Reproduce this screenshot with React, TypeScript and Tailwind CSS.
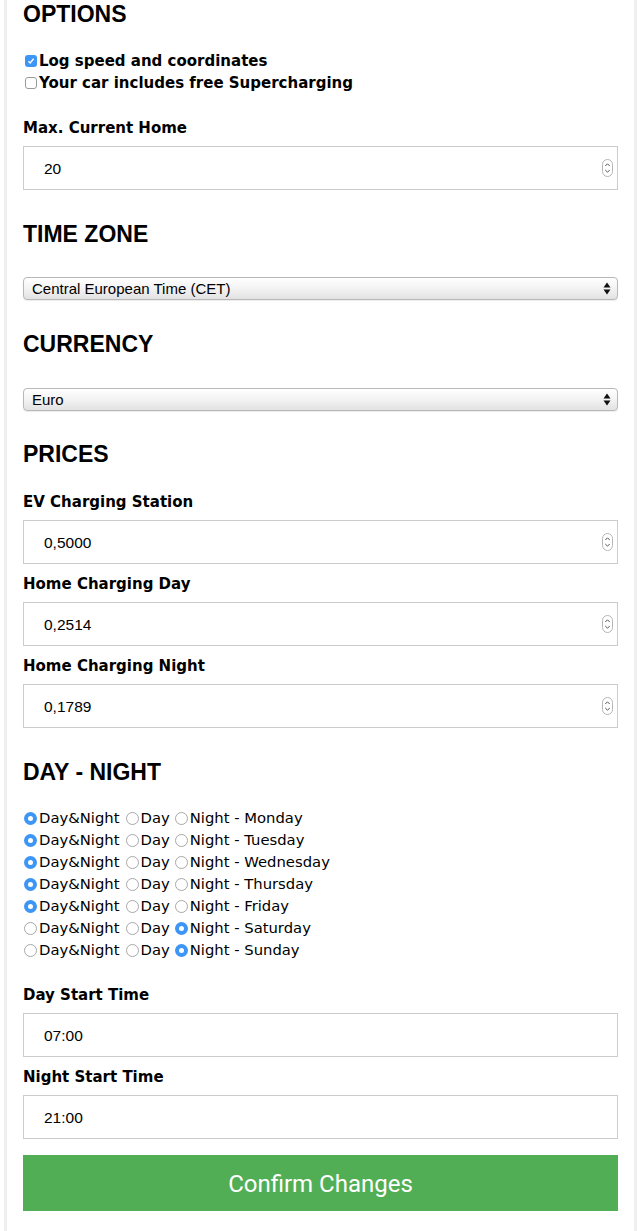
import { useState } from "react";

const days = ["Monday", "Tuesday", "Wednesday", "Thursday", "Friday", "Saturday", "Sunday"];
const initialModes = ["both", "both", "both", "both", "both", "night", "night"];

function Heading({ children, className = "" }: { children: React.ReactNode; className?: string }) {
    return (
        <h2 className={`h-[28px] leading-[28px] text-[23px] font-bold font-['Liberation_Sans',Arial,sans-serif] ${className}`}>
            {children}
        </h2>
    );
}

function Label({ children, className = "" }: { children: React.ReactNode; className?: string }) {
    return (
        <div className={`h-[22px] leading-[24px] text-[15px] font-bold font-['DejaVu_Sans',Verdana,sans-serif] ${className}`}>
            {children}
        </div>
    );
}

function Spinner() {
    return (
        <svg width="11" height="18" viewBox="0 0 11 18" className="shrink-0">
            <rect x="0.5" y="0.5" width="10" height="17" rx="5" fill="white" stroke="#b5b5b5" />
            <path d="M3.3 7 L5.5 4.8 L7.7 7" fill="none" stroke="#555" strokeWidth="1" />
            <path d="M3.3 11 L5.5 13.2 L7.7 11" fill="none" stroke="#555" strokeWidth="1" />
        </svg>
    );
}

function Field({ value, spin = false, className = "" }: { value: string; spin?: boolean; className?: string }) {
    return (
        <div
            className={`h-[44px] border border-[#cccccc] bg-white flex items-center pl-[20px] pr-[4px] text-[15.5px] font-['Liberation_Sans',Arial,sans-serif] ${className}`}
        >
            <span className="flex-1 pt-[1px]">{value}</span>
            {spin && <Spinner />}
        </div>
    );
}

function Select({ value, className = "" }: { value: string; className?: string }) {
    return (
        <div
            className={`h-[23px] rounded-[4px] border border-[#b8b8b8] bg-gradient-to-b from-white via-[#f3f3f3] to-[#e2e2e2] flex items-center pl-[8px] pr-[6px] text-[15px] font-['Liberation_Sans',Arial,sans-serif] shadow-[0_1px_1px_rgba(0,0,0,0.08)] ${className}`}
        >
            <span className="flex-1 pt-[1px]">{value}</span>
            <svg width="8" height="13" viewBox="0 0 8 13">
                <path d="M4 0.5 L7.5 5.5 L0.5 5.5 Z" fill="#111" />
                <path d="M4 12.5 L7.5 7.5 L0.5 7.5 Z" fill="#111" />
            </svg>
        </div>
    );
}

function Check({ on }: { on: boolean }) {
    return on ? (
        <span className="w-[12px] h-[12px] rounded-[3px] bg-[#3d95f5] flex items-center justify-center shrink-0 mr-[2px]">
            <svg width="8" height="8" viewBox="0 0 8 8">
                <path d="M1.5 4.2 L3.2 6 L6.6 1.8" fill="none" stroke="white" strokeWidth="1.4" />
            </svg>
        </span>
    ) : (
        <span className="w-[12px] h-[12px] rounded-[3px] border border-[#9a9a9a] bg-white shrink-0 mr-[2px]" />
    );
}

function Radio({ on }: { on: boolean }) {
    return on ? (
        <span className="w-[13px] h-[13px] rounded-full bg-[#3d95f5] flex items-center justify-center shrink-0 mr-[2px]">
            <span className="w-[5px] h-[5px] rounded-full bg-white" />
        </span>
    ) : (
        <span className="w-[13px] h-[13px] rounded-full border border-[#a8a8a8] bg-white shrink-0 mr-[2px]" />
    );
}

export default function App() {
    const [modes] = useState(initialModes);

    return (
        <div className="bg-white min-h-screen">
            <div className="ml-[4px] w-[633px] border-x-[3px] border-[#efefef] px-[16px] pb-[40px] text-black bg-white">
                <Heading>OPTIONS</Heading>

                <div className="mt-[22px] text-[15px] font-bold font-['DejaVu_Sans',Verdana,sans-serif]">
                    <div className="h-[22px] flex items-center pl-[2px]">
                        <Check on={true} />
                        <span>Log speed and coordinates</span>
                    </div>
                    <div className="h-[22px] flex items-center pl-[2px]">
                        <Check on={false} />
                        <span>Your car includes free Supercharging</span>
                    </div>
                </div>

                <Label className="mt-[22px]">Max. Current Home</Label>
                <Field value="20" spin className="mt-[8px]" />

                <Heading className="mt-[30px]">TIME ZONE</Heading>
                <Select value="Central European Time (CET)" className="mt-[29px]" />

                <Heading className="mt-[30px]">CURRENCY</Heading>
                <Select value="Euro" className="mt-[30px]" />

                <Heading className="mt-[29px]">PRICES</Heading>
                <Label className="mt-[22px]">EV Charging Station</Label>
                <Field value="0,5000" spin className="mt-[8px]" />
                <Label className="mt-[8px]">Home Charging Day</Label>
                <Field value="0,2514" spin className="mt-[8px]" />
                <Label className="mt-[8px]">Home Charging Night</Label>
                <Field value="0,1789" spin className="mt-[8px]" />

                <Heading className="mt-[30px]">DAY - NIGHT</Heading>
                <div className="mt-[21px] text-[14.8px] font-['DejaVu_Sans',Verdana,sans-serif]">
                    {days.map((day, i) => (
                        <div key={day} className="h-[22px] flex items-center pl-[1px]">
                            <Radio on={modes[i] === "both"} />
                            <span>Day&amp;Night</span>
                            <span className="w-[6px]" />
                            <Radio on={modes[i] === "day"} />
                            <span>Day</span>
                            <span className="w-[5px]" />
                            <Radio on={modes[i] === "night"} />
                            <span>Night - {day}</span>
                        </div>
                    ))}
                </div>

                <Label className="mt-[22px]">Day Start Time</Label>
                <Field value="07:00" className="mt-[8px]" />
                <Label className="mt-[8px]">Night Start Time</Label>
                <Field value="21:00" className="mt-[8px]" />

                <button className="mt-[16px] w-full h-[56px] pt-[1px] bg-[#51ae55] text-white text-[24px] font-['Roboto',sans-serif]">
                    Confirm Changes
                </button>
            </div>
        </div>
    );
}
